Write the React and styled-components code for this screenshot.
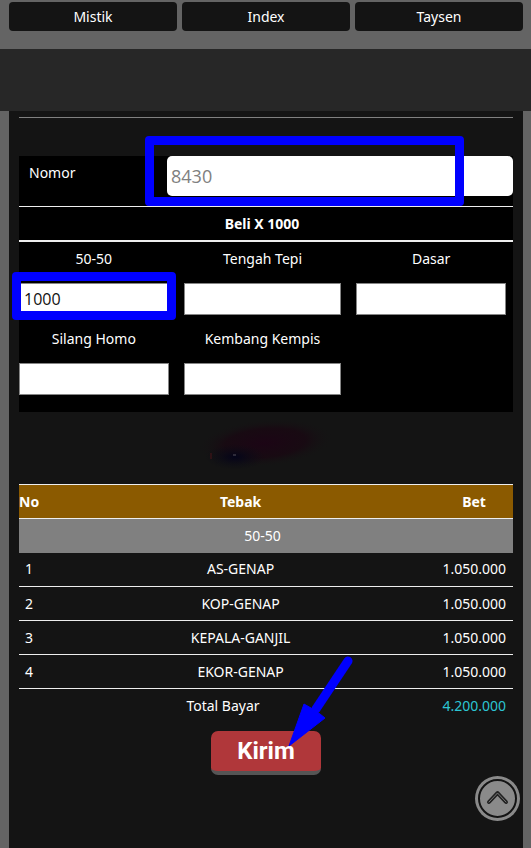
import styled, { createGlobalStyle } from "styled-components";

const colors = {
  page: "#646464",
  band: "#272727",
  panel: "#141414",
  gold: "#8b5a00",
  gray: "#808080",
  cyan: "#2cc5d2",
  red: "#b0373a",
  mark: "#0000ff",
};

const GlobalStyle = createGlobalStyle`
  * {
    box-sizing: border-box;
  }
  body {
    margin: 0;
    background: ${colors.page};
    color: #fff;
    font-family: "Noto Sans", "Open Sans", sans-serif;
    font-size: 14px;
    line-height: 20px;
  }
`;

const Page = styled.div`
  display: flex;
  flex-direction: column;
  min-height: 100vh;
`;

const Nav = styled.nav`
  display: grid;
  grid-template-columns: repeat(3, 1fr);
  gap: 5px;
  padding: 2px 8px 18px 9px;
`;

const NavLink = styled.a`
  padding: 5px 0 4px;
  border-radius: 4px;
  background: ${colors.panel};
  color: #fff;
  text-align: center;
  text-decoration: none;
`;

const Band = styled.div`
  height: 62px;
  background: ${colors.band};
`;

const Panel = styled.main`
  flex: 1;
  margin: 0 8px 0 9px;
  padding: 0 10px;
  background: ${colors.panel};
`;

const Divider = styled.hr`
  margin: 6px 0 38px;
  border: 0;
  border-top: 1px solid ${colors.gray};
`;

const BetForm = styled.section`
  padding-bottom: 10px;
  background: #000;
`;

const NumberRow = styled.div`
  display: flex;
  height: 51px;
  border-bottom: 1px solid #eee;
`;

const NumberLabel = styled.label`
  width: 148px;
  padding: 7px 10px;
`;

const Field = styled.div`
  position: relative;
  flex: 1;
`;

const NumberInput = styled.input`
  width: 100%;
  height: 40px;
  padding: 0 4px;
  border: 0;
  border-radius: 5px;
  background: #fff;
  color: #808080;
  font: 18px "Open Sans", sans-serif;
`;

const FormTitle = styled.h2`
  margin: 0;
  padding: 7px 8px 6px 0;
  border-bottom: 2px solid #eee;
  font-size: 14px;
  line-height: 20px;
  text-align: center;
`;

const BetGrid = styled.div`
  display: grid;
  grid-template-columns: 19fr 20fr 19fr;
  column-gap: 15px;
  padding-right: 7px;
`;

const BetLabel = styled.label`
  display: block;
  padding: 7px 0 14px;
  text-align: center;
`;

const BetInput = styled.input`
  display: block;
  width: 100%;
  height: 32px;
  margin-bottom: 7px;
  padding: 0 4px;
  border: 1px solid #858585;
  border-radius: 0;
  background: #fff;
  color: #111;
  font: 16px "Open Sans", sans-serif;
`;

const Highlight = styled.span`
  position: absolute;
  inset: ${(props) => props.$inset};
  border: 9px solid ${colors.mark};
  border-radius: 4px;
  pointer-events: none;
`;

const Smudge = styled.svg`
  display: block;
  width: 150px;
  height: 72px;
  margin: 0 auto;
`;

const BetTable = styled.table`
  width: 100%;
  border-collapse: collapse;
  border-top: 1px solid #eee;
`;

const Row = styled.tr`
  height: 34px;
  background: ${(props) => props.$bg || "transparent"};
  border-bottom: ${(props) => (props.$line ? "1px solid #eee" : "0")};
`;

const HeadCell = styled.th`
  width: ${(props) => props.$width || "auto"};
  padding: 0 7px 0 0;
`;

const Cell = styled.td`
  padding: 0 7px 0 0;
  color: ${(props) => props.$color || "inherit"};
  text-align: ${(props) => props.$align || "center"};
`;

const TotalCell = styled(Cell)`
  padding-right: 15px;
`;

const Actions = styled.div`
  display: flex;
  justify-content: center;
  padding: 8px 0 20px;
`;

const SubmitWrap = styled.div`
  position: relative;
`;

const SubmitButton = styled.button`
  width: 110px;
  height: 44px;
  padding: 0;
  border: 0;
  border-bottom: 4px solid #555;
  border-radius: 7px;
  background: ${colors.red};
  color: #fff;
  font: bold 24px Roboto, sans-serif;
`;

const Arrow = styled.svg`
  position: absolute;
  left: 77px;
  top: -76px;
  pointer-events: none;
`;

const TopButton = styled.button`
  position: fixed;
  right: 11px;
  bottom: 27px;
  width: 45px;
  height: 45px;
  padding: 0;
  border: 0;
  border-radius: 50%;
  background: none;
`;

const bets = [
  { id: "lima", label: "50-50", value: "1000", marked: true },
  { id: "tengah", label: "Tengah Tepi" },
  { id: "dasar", label: "Dasar" },
  { id: "silang", label: "Silang Homo" },
  { id: "kembang", label: "Kembang Kempis" },
];

const guesses = ["AS-GENAP", "KOP-GENAP", "KEPALA-GANJIL", "EKOR-GENAP"];

function BetField({ id, label, value, marked }) {
  return (
    <div>
      <BetLabel htmlFor={id}>{label}</BetLabel>
      <Field>
        <BetInput id={id} defaultValue={value} />
        {marked && <Highlight $inset="-11px -7px -5px -7px" />}
      </Field>
    </div>
  );
}

function Stain() {
  return (
    <Smudge viewBox="0 0 150 72" aria-hidden="true">
      <defs>
        <radialGradient id="plum">
          <stop offset="0" stopColor="#1c0515" />
          <stop offset="0.6" stopColor="#190812" stopOpacity="0.8" />
          <stop offset="1" stopColor="#141414" stopOpacity="0" />
        </radialGradient>
        <radialGradient id="navy">
          <stop offset="0" stopColor="#04041a" />
          <stop offset="1" stopColor="#0c0c14" stopOpacity="0" />
        </radialGradient>
      </defs>
      <ellipse cx="74" cy="31" rx="68" ry="24" fill="url(#plum)" transform="rotate(-5 74 31)" />
      <ellipse cx="44" cy="45" rx="30" ry="13" fill="url(#navy)" />
      <path d="M20 41v6" stroke="#4a1418" strokeWidth="1" />
      <path d="M42 43h3" stroke="#55505c" strokeWidth="1" />
    </Smudge>
  );
}

function ResultTable() {
  return (
    <BetTable>
      <thead>
        <Row $bg={colors.gold} $line>
          <HeadCell $width="27px">No</HeadCell>
          <HeadCell>Tebak</HeadCell>
          <HeadCell $width="71px">Bet</HeadCell>
        </Row>
      </thead>
      <tbody>
        <Row $bg={colors.gray}>
          <Cell colSpan={3}>50-50</Cell>
        </Row>
        {guesses.map((guess, i) => (
          <Row key={guess} $line>
            <Cell>{i + 1}</Cell>
            <Cell>{guess}</Cell>
            <Cell $align="right">1.050.000</Cell>
          </Row>
        ))}
        <Row>
          <TotalCell colSpan={2}>Total Bayar</TotalCell>
          <Cell $align="right" $color={colors.cyan}>
            4.200.000
          </Cell>
        </Row>
      </tbody>
    </BetTable>
  );
}

function App() {
  return (
    <Page>
      <GlobalStyle />
      <Nav>
        <NavLink href="#mistik">Mistik</NavLink>
        <NavLink href="#index">Index</NavLink>
        <NavLink href="#taysen">Taysen</NavLink>
      </Nav>
      <Band />
      <Panel>
        <Divider />
        <BetForm>
          <NumberRow>
            <NumberLabel htmlFor="nomor">Nomor</NumberLabel>
            <Field>
              <NumberInput id="nomor" defaultValue="8430" />
              <Highlight $inset="-20px 49px 0 -22px" />
            </Field>
          </NumberRow>
          <FormTitle>Beli X 1000</FormTitle>
          <BetGrid>
            {bets.map((bet) => (
              <BetField key={bet.id} {...bet} />
            ))}
          </BetGrid>
        </BetForm>
        <Stain />
        <ResultTable />
        <Actions>
          <SubmitWrap>
            <SubmitButton type="button">Kirim</SubmitButton>
            <Arrow width="68" height="92" viewBox="0 0 68 92" aria-hidden="true">
              <path d="M60 6 28 54" stroke={colors.mark} strokeWidth="9" strokeLinecap="round" />
              <path d="M1 91 16 49l7 4 9 6 5 4Z" fill={colors.mark} stroke={colors.mark} strokeLinejoin="round" />
            </Arrow>
          </SubmitWrap>
        </Actions>
      </Panel>
      <TopButton type="button" aria-label="Top">
        <svg width="45" height="45" viewBox="0 0 45 45" fill="none">
          <circle cx="22.5" cy="22.5" r="22.5" fill="#8a8a8a" />
          <circle cx="22.5" cy="22.5" r="18.5" stroke="#141414" strokeWidth="2" />
          <path d="m14 26 8.5-9 8.5 9" stroke="#222" strokeWidth="4" strokeLinecap="round" strokeLinejoin="round" />
          <path d="m14 26 8.5-9 8.5 9" stroke="#777" strokeWidth="1" strokeLinecap="round" strokeLinejoin="round" />
        </svg>
      </TopButton>
    </Page>
  );
}

export default App;
